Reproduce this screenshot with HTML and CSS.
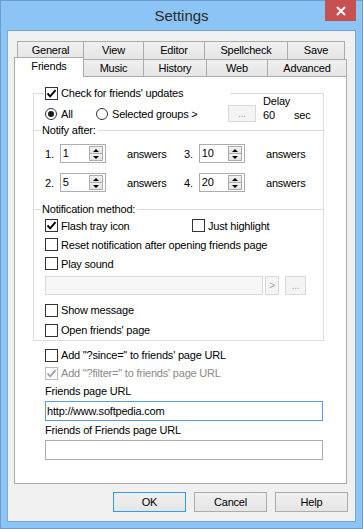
FILE: index.html
```html
<!DOCTYPE html>
<html lang="en">
<head>
  <meta charset="UTF-8">
  <title>Settings</title>
  <link rel="stylesheet" href="styles.css">
</head>
<body>

  <div class="window">
    <div class="titlebar">
      <div class="spacer"></div>
      <div class="title">Settings</div>
      <button class="close" type="button">
        <svg width="10" height="10" viewBox="0 0 10 10"><path d="M1 1 L9 9 M9 1 L1 9" stroke="#fff" stroke-width="2"/></svg>
      </button>
    </div>

    <div class="client">
      <div class="tab-row back">
        <div class="tab t-general">General</div>
        <div class="tab t-view">View</div>
        <div class="tab t-editor">Editor</div>
        <div class="tab t-spell">Spellcheck</div>
        <div class="tab t-save">Save</div>
      </div>
      <div class="tab-row front">
        <div class="tab active t-friends">Friends</div>
        <div class="tab t-music">Music</div>
        <div class="tab t-history">History</div>
        <div class="tab t-web">Web</div>
        <div class="tab t-advanced">Advanced</div>
      </div>

      <div class="panel">
        <fieldset class="frame">
          <legend>
            <span class="box"><svg width="11" height="11" viewBox="0 0 11 11"><path d="M1.5 5.5 L4.2 8.3 L9.5 2.2" stroke="#000" stroke-width="1.9" fill="none"/></svg></span>
            Check for friends' updates
          </legend>

          <div class="opts">
            <div class="radios">
              <label class="radio r-all"><span class="dot on"></span>All</label>
              <label class="radio"><span class="dot"></span>Selected groups &gt;</label>
            </div>
            <button class="btn-dots" type="button" disabled>...</button>
            <div class="delay">
              <div>Delay</div>
              <div class="delay-val"><span class="delay-num">60</span><span>sec</span></div>
            </div>
          </div>

          <div class="sep"><span>Notify after:</span></div>
          <div class="counts">
            <div class="count-row">
              <span class="num">1.</span>
              <div class="spin"><span class="val">1</span><span class="spin-btns"><i class="up"></i><i class="down"></i></span></div>
              <span class="ans">answers</span>
              <span class="num">3.</span>
              <div class="spin"><span class="val">10</span><span class="spin-btns"><i class="up"></i><i class="down"></i></span></div>
              <span class="ans">answers</span>
            </div>
            <div class="count-row">
              <span class="num">2.</span>
              <div class="spin"><span class="val">5</span><span class="spin-btns"><i class="up"></i><i class="down"></i></span></div>
              <span class="ans">answers</span>
              <span class="num">4.</span>
              <div class="spin"><span class="val">20</span><span class="spin-btns"><i class="up"></i><i class="down"></i></span></div>
              <span class="ans">answers</span>
            </div>
          </div>

          <div class="sep"><span>Notification method:</span></div>
          <div class="method">
            <div class="row">
              <label class="check first"><span class="box"><svg width="11" height="11" viewBox="0 0 11 11"><path d="M1.5 5.5 L4.2 8.3 L9.5 2.2" stroke="#000" stroke-width="1.9" fill="none"/></svg></span>Flash tray icon</label>
              <label class="check"><span class="box"></span>Just highlight</label>
            </div>
            <div class="row">
              <label class="check"><span class="box"></span>Reset notification after opening friends page</label>
            </div>
            <div class="row">
              <label class="check"><span class="box"></span>Play sound</label>
            </div>
            <div class="sound">
              <div class="sound-input"></div>
              <button class="small" type="button" disabled>&gt;</button>
              <button class="small wide" type="button" disabled>...</button>
            </div>
            <div class="row tall gap">
              <label class="check"><span class="box"></span>Show message</label>
            </div>
            <div class="row tall">
              <label class="check"><span class="box"></span>Open friends' page</label>
            </div>
          </div>
        </fieldset>

        <div class="extra">
          <div class="row short">
            <label class="check"><span class="box"></span>Add "?since=" to friends' page URL</label>
          </div>
          <div class="row short disabled">
            <label class="check"><span class="box"><svg width="11" height="11" viewBox="0 0 11 11"><path d="M1.5 5.5 L4.2 8.3 L9.5 2.2" stroke="#a3a3a3" stroke-width="1.9" fill="none"/></svg></span>Add "?filter=" to friends' page URL</label>
          </div>
          <div class="field-label">Friends page URL</div>
          <div class="text-input focused">http://www.softpedia.com</div>
          <div class="field-label">Friends of Friends page URL</div>
          <div class="text-input"></div>
        </div>
      </div>

      <div class="actions">
        <button class="btn default" type="button">OK</button>
        <button class="btn" type="button">Cancel</button>
        <button class="btn" type="button">Help</button>
      </div>
    </div>
  </div>

</body>
</html>
```

FILE: styles.css
```css
* {
  margin: 0;
  padding: 0;
  box-sizing: border-box;
}

body {
  font-family: 'Liberation Sans', Arial, sans-serif;
  font-size: 11px;
  letter-spacing: -0.2px;
  color: #000;
  background-color: #8bc4f5;
}

button {
  font: inherit;
  letter-spacing: inherit;
  color: inherit;
}

.window {
  width: 363px;
  height: 529px;
  background-color: #8bc4f5;
  border: 1px solid #6b9dcf;
}

/* title bar */
.titlebar {
  display: flex;
  height: 29px;
}

.titlebar .spacer {
  width: 37px;
}

.title {
  flex: 1;
  text-align: center;
  font-size: 15px;
  line-height: 29px;
  letter-spacing: 0;
  color: #2b2b2b;
}

.close {
  width: 31px;
  height: 21px;
  margin-top: -1px;
  margin-right: 6px;
  background-color: #c75050;
  border: none;
  display: flex;
  align-items: center;
  justify-content: center;
}

/* client area */
.client {
  margin: 0 6px;
  height: 492px;
  border: 1px solid #79a7d6;
  background-color: #f0f0f0;
  padding: 10px 7px 9px 6px;
  display: flex;
  flex-direction: column;
}

/* tabs */
.tab-row {
  display: flex;
  height: 18px;
}

.tab-row.back {
  margin-left: 3px;
}

.tab-row.front {
  height: 17px;
}

.tab {
  height: 100%;
  border: 1px solid #acacac;
  border-bottom: none;
  background: linear-gradient(#f0f0f0, #e5e5e5);
  margin-right: -1px;
  text-align: center;
  line-height: 17px;
}

.tab-row.front .tab {
  line-height: 16px;
}

.tab-row.front .tab.active {
  height: 20px;
  margin-top: -2px;
  background: #fff;
  position: relative;
  z-index: 1;
  line-height: 16px;
}

.t-general { width: 67px; }
.t-view { width: 61px; }
.t-editor { width: 62px; }
.t-spell { width: 84px; }
.t-save { width: 58px; }
.t-friends { width: 70px; }
.t-music { width: 61px; }
.t-history { width: 64px; }
.t-web { width: 62px; }
.t-advanced { width: 80px; }

/* page */
.panel {
  width: 333px;
  height: 408px;
  border: 1px solid #acacac;
  background-color: #fff;
  padding: 9px 0 0 18px;
}

.frame {
  width: 291px;
  min-width: 0;
  border: 1px solid #dcdcdc;
}

.frame legend {
  margin-left: 10px;
  width: 186px;
  height: 14px;
  padding-left: 1px;
  display: flex;
  align-items: center;
  gap: 3px;
}

.box {
  width: 13px;
  height: 13px;
  flex: none;
  border: 1px solid #333;
  background-color: #fff;
  display: flex;
  align-items: center;
  justify-content: center;
}

.check {
  display: flex;
  align-items: center;
  gap: 3px;
}

/* check for updates */
.opts {
  display: flex;
  height: 23px;
}

.radios {
  display: flex;
  width: 194px;
  height: 14px;
  margin-top: 7px;
  padding-left: 11px;
}

.radio {
  display: flex;
  align-items: center;
  gap: 4px;
}

.r-all {
  width: 51px;
}

.dot {
  width: 12px;
  height: 12px;
  border: 1px solid #333;
  border-radius: 50%;
  background-color: #fff;
  display: flex;
  align-items: center;
  justify-content: center;
}

.dot.on::after {
  content: '';
  width: 6px;
  height: 6px;
  border-radius: 50%;
  background-color: #1a1a1a;
}

.btn-dots {
  width: 28px;
  height: 17px;
  margin-top: 5px;
  border: 1px solid #d9d9d9;
  background-color: #f4f4f4;
  color: #a8a8a8;
  font-size: 10px;
  line-height: 14px;
}

.delay {
  margin-left: 7px;
  margin-top: -6px;
  line-height: 14px;
}

.delay-val {
  display: flex;
}

.delay-num {
  width: 31px;
}

/* separators */
.sep {
  display: flex;
  align-items: center;
  height: 14px;
}

.sep::before {
  content: '';
  width: 7px;
  height: 1px;
  background-color: #dcdcdc;
}

.sep::after {
  content: '';
  flex: 1;
  height: 1px;
  background-color: #dcdcdc;
}

.sep span {
  padding: 0 2px 0 1px;
}

/* notify after */
.counts {
  padding: 7px 0 10px 11px;
  display: flex;
  flex-direction: column;
  gap: 10px;
}

.count-row {
  display: flex;
  align-items: center;
  height: 19px;
}

.num {
  width: 15px;
}

.spin {
  width: 47px;
  height: 19px;
  border: 1px solid #abadb3;
  display: flex;
}

.spin .val {
  flex: 1;
  padding-left: 2px;
  line-height: 17px;
}

.spin-btns {
  width: 16px;
  padding: 1px 2px 1px 0;
  display: flex;
  flex-direction: column;
}

.spin-btns i {
  flex: 1;
  border: 1px solid #acacac;
  background: linear-gradient(#f2f2f2, #e3e3e3);
  display: flex;
  align-items: center;
  justify-content: center;
}

.spin-btns i + i {
  margin-top: -1px;
}

.spin-btns .up::after {
  content: '';
  border-left: 3px solid transparent;
  border-right: 3px solid transparent;
  border-bottom: 3px solid #000;
}

.spin-btns .down::after {
  content: '';
  border-left: 3px solid transparent;
  border-right: 3px solid transparent;
  border-top: 3px solid #000;
}

.ans {
  width: 79px;
  padding-left: 21px;
}

/* notification method */
.method {
  padding-left: 11px;
}

.row {
  display: flex;
  align-items: center;
  height: 19px;
}

.row .first {
  width: 147px;
}

.row.tall {
  height: 20px;
}

.row.gap {
  margin-top: 5px;
}

.sound {
  display: flex;
  height: 19px;
  margin-top: 3px;
}

.sound-input {
  width: 218px;
  border: 1px solid #d9d9d9;
  background-color: #f7f7f7;
}

.small {
  width: 14px;
  margin-left: 2px;
  border: 1px solid #d9d9d9;
  background-color: #f4f4f4;
  color: #a8a8a8;
  font-size: 10px;
}

.small.wide {
  width: 21px;
  margin-left: 6px;
}

/* url section */
.extra {
  margin-top: 5px;
  padding-left: 12px;
}

.row.short {
  height: 18px;
}

.disabled {
  color: #8a8a8a;
}

.disabled .box {
  border-color: #bcbcbc;
}

.field-label {
  height: 18px;
  line-height: 18px;
}

.text-input {
  width: 278px;
  height: 20px;
  margin-top: 1px;
  border: 1px solid #abadb3;
  padding-left: 1px;
  line-height: 18px;
}

.text-input.focused {
  border-color: #569de5;
}

/* dialog buttons */
.actions {
  display: flex;
  justify-content: flex-end;
  gap: 8px;
  margin-top: 8px;
}

.btn {
  width: 73px;
  height: 20px;
  border: 1px solid #acacac;
  background: linear-gradient(#f0f0f0, #e5e5e5);
}

.btn.default {
  border-color: #3399ff;
}
```
